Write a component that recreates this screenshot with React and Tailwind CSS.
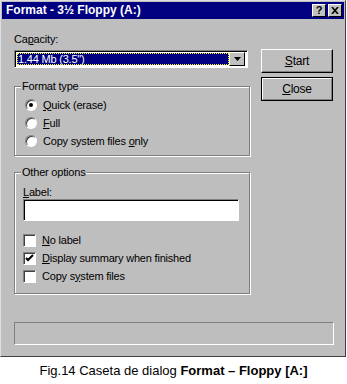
import React from 'react';

const ui = { fontFamily: '"Liberation Sans", Arial, sans-serif' };

const U = ({ children }) => <span className="underline underline-offset-[1px]">{children}</span>;

const Radio = ({ checked, children }) => (
  <div className="flex items-center h-[18px]">
    <span className="relative w-[12px] h-[12px] rounded-full bg-white border border-t-[#808080] border-l-[#808080] border-r-white border-b-white shadow-[inset_1px_1px_0_#404040] flex items-center justify-center">
      {checked && <span className="w-[4px] h-[4px] rounded-full bg-black" />}
    </span>
    <span className="ml-[6px] leading-[13px]">{children}</span>
  </div>
);

const Check = ({ checked, children }) => (
  <div className="flex items-center h-[18px]">
    <span className="w-[13px] h-[13px] bg-white border border-t-[#808080] border-l-[#808080] border-r-white border-b-white shadow-[inset_1px_1px_0_#404040] flex items-center justify-center">
      {checked && (
        <svg width="9" height="9" viewBox="0 0 9 9">
          <path d="M1 4 L3 6 L8 1" stroke="#000" strokeWidth="2" fill="none" />
        </svg>
      )}
    </span>
    <span className="ml-[6px] leading-[13px]">{children}</span>
  </div>
);

const Group = ({ title, className, children }) => (
  <div className={`relative border border-[#808080] shadow-[inset_1px_1px_0_#fff,1px_1px_0_#fff] ${className}`}>
    <span className="absolute -top-[7px] left-[6px] px-[1px] bg-[#bebebe] leading-[13px]">{title}</span>
    {children}
  </div>
);

const Button = ({ isDefault, children }) => (
  <div className={`h-[24px] w-[72px] flex items-center justify-center bg-[#bebebe] border ${isDefault ? 'border-black' : 'border-t-white border-l-white border-r-black border-b-black'}`}>
    <div className={`w-full h-full flex items-center justify-center text-[12px] ${isDefault ? 'border border-t-white border-l-white border-r-[#808080] border-b-[#808080]' : 'shadow-[inset_-1px_-1px_0_#808080]'}`}>
      {children}
    </div>
  </div>
);

export default function App() {
  return (
    <div className="w-[347px] h-[384px] bg-white text-[11px] text-black" style={ui}>
      <div className="w-[346px] h-[357px] bg-[#bebebe] border border-t-[#dfdfdf] border-l-[#dfdfdf] border-r-[#404040] border-b-[#404040] pt-[1px] px-[1px] tracking-[-0.2px]">
        <div className="h-[17px] bg-[#000080] flex items-center justify-between pl-[4px] pr-[2px]">
          <span className="text-white font-bold text-[12px] leading-[13px] tracking-normal">Format - 3½ Floppy (A:)</span>
          <div className="flex gap-[2px]">
            <span className="w-[14px] h-[13px] bg-[#c0c0c0] border border-t-white border-l-white border-r-black border-b-black flex items-center justify-center font-bold text-[11px] leading-none">?</span>
            <span className="w-[14px] h-[13px] bg-[#c0c0c0] border border-t-white border-l-white border-r-black border-b-black flex items-center justify-center">
              <svg width="8" height="7" viewBox="0 0 8 7">
                <path d="M1 0 L7 7 M7 0 L1 7" stroke="#000" strokeWidth="1.6" />
              </svg>
            </span>
          </div>
        </div>

        <div className="pl-[12px] pt-[14px]">
          <div className="flex">
            <div className="w-[236px]">
              <div className="leading-[13px]">Ca<U>p</U>acity:</div>
              <div className="mt-[4px] h-[18px] w-[234px] bg-white border border-t-[#808080] border-l-[#808080] border-r-white border-b-white shadow-[inset_1px_1px_0_#000] flex p-[2px] pl-[2px]">
                <div className="flex-1 bg-[#000080] text-white leading-[12px] pl-[1px] outline-1 outline-dotted outline-[#ffff00] -outline-offset-1">1.44 Mb (3.5")</div>
                <div className="w-[16px] h-[14px] -mt-[1px] bg-[#c0c0c0] border border-t-white border-l-white border-r-black border-b-black flex items-center justify-center">
                  <svg width="7" height="4" viewBox="0 0 7 4"><path d="M0 0 H7 L3.5 4 Z" fill="#000" /></svg>
                </div>
              </div>

              <Group title="Format type" className="mt-[18px] h-[70px] pl-[10px] pt-[9px]">
                <Radio checked><U>Q</U>uick (erase)</Radio>
                <Radio><U>F</U>ull</Radio>
                <Radio>Copy system files <U>o</U>nly</Radio>
              </Group>

              <Group title="Other options" className="mt-[16px] h-[122px] pl-[8px] pt-[13px]">
                <div className="leading-[13px]"><U>L</U>abel:</div>
                <div className="h-[22px] w-[216px] bg-white border border-t-[#808080] border-l-[#808080] border-r-white border-b-white shadow-[inset_1px_1px_0_#000]" />
                <div className="mt-[10px]">
                  <Check><U>N</U>o label</Check>
                  <Check checked><U>D</U>isplay summary when finished</Check>
                  <Check>Copy s<U>y</U>stem files</Check>
                </div>
              </Group>
            </div>

            <div className="ml-[11px] mt-[16px] flex flex-col gap-[4px]">
              <Button><U>S</U>tart</Button>
              <Button isDefault><U>C</U>lose</Button>
            </div>
          </div>

          <div className="mt-[28px] h-[23px] w-[320px] border border-t-[#808080] border-l-[#808080] border-r-white border-b-white" />
        </div>
      </div>

      <div className="h-[27px] flex items-center justify-center text-[13px]">
        Fig.14 Caseta de dialog&nbsp;<b>Format – Floppy [A:]</b>
      </div>
    </div>
  );
}
